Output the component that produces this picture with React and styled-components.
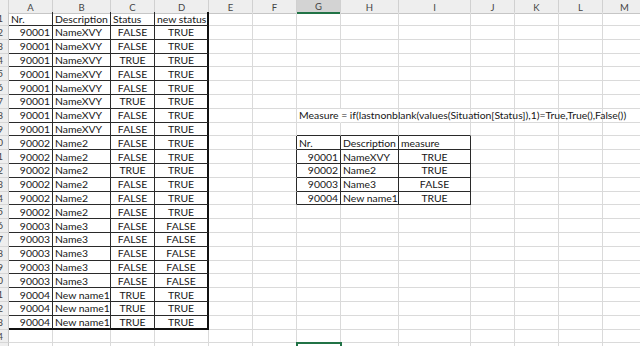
import React from "react";
import styled, { createGlobalStyle } from "styled-components";

const GlobalStyle = createGlobalStyle`
    html, body {
        margin: 0;
        padding: 0;
        background: #ffffff;
        overflow: hidden;
    }
`;

/* column widths, first one is the row header */
const COLS = [
    { key: "", w: 9 },
    { key: "A", w: 44 },
    { key: "B", w: 58 },
    { key: "C", w: 44 },
    { key: "D", w: 54 },
    { key: "E", w: 44 },
    { key: "F", w: 44 },
    { key: "G", w: 44 },
    { key: "H", w: 58 },
    { key: "I", w: 72 },
    { key: "J", w: 44 },
    { key: "K", w: 44 },
    { key: "L", w: 44 },
    { key: "M", w: 44 },
];

const ROW_H = 13.8;
const ROW_COUNT = 25;

const Sheet = styled.div`
    width: 640px;
    height: 346px;
    overflow: hidden;
    font-family: Lato, "Liberation Sans", sans-serif;
    font-size: 10.4px;
    color: #161616;
`;

const Row = styled.div`
    display: grid;
    grid-template-columns: ${COLS.map((c) => c.w + "px").join(" ")};
    height: ${(p) => p.$h}px;
`;

const ColHead = styled.div`
    box-sizing: border-box;
    display: flex;
    align-items: center;
    justify-content: center;
    background: ${(p) => (p.$selected ? "#d3d3d3" : "#eeeeee")};
    border-right: 1px solid #d0d0d0;
    border-bottom: ${(p) => (p.$selected ? "2px solid #217346" : "1px solid #c6c6c6")};
    color: #444;
    font-size: 9.5px;
    padding-top: 1px;
`;

const RowHead = styled.div`
    box-sizing: border-box;
    display: flex;
    align-items: center;
    justify-content: flex-end;
    overflow: hidden;
    background: #eeeeee;
    border-right: 1px solid #c6c6c6;
    border-bottom: 1px solid #d6d6d6;
    color: #444;
    font-size: 9.5px;
    padding-right: 5px;
    white-space: nowrap;
`;

const Cell = styled.div`
    box-sizing: border-box;
    display: flex;
    align-items: center;
    justify-content: ${(p) =>
        p.$align === "right" ? "flex-end" : p.$align === "center" ? "center" : "flex-start"};
    padding: 0 2px;
    white-space: nowrap;
    overflow: ${(p) => (p.$spill ? "visible" : "hidden")};
    border-right: ${(p) => p.$br};
    border-bottom: ${(p) => p.$bb};
    outline: ${(p) => (p.$active ? "2px solid #217346" : "none")};
    outline-offset: -1px;
    position: ${(p) => (p.$active ? "relative" : "static")};
`;

const Formula = styled.span`
    position: relative;
    z-index: 1;
`;

/* source table A1:D23 */
const mainRows = [
    ["90001", "NameXVY", "FALSE", "TRUE"],
    ["90001", "NameXVY", "FALSE", "TRUE"],
    ["90001", "NameXVY", "TRUE", "TRUE"],
    ["90001", "NameXVY", "FALSE", "TRUE"],
    ["90001", "NameXVY", "FALSE", "TRUE"],
    ["90001", "NameXVY", "TRUE", "TRUE"],
    ["90001", "NameXVY", "FALSE", "TRUE"],
    ["90001", "NameXVY", "FALSE", "TRUE"],
    ["90002", "Name2", "FALSE", "TRUE"],
    ["90002", "Name2", "FALSE", "TRUE"],
    ["90002", "Name2", "TRUE", "TRUE"],
    ["90002", "Name2", "FALSE", "TRUE"],
    ["90002", "Name2", "FALSE", "TRUE"],
    ["90002", "Name2", "FALSE", "TRUE"],
    ["90003", "Name3", "FALSE", "FALSE"],
    ["90003", "Name3", "FALSE", "FALSE"],
    ["90003", "Name3", "FALSE", "FALSE"],
    ["90003", "Name3", "FALSE", "FALSE"],
    ["90003", "Name3", "FALSE", "FALSE"],
    ["90004", "New name1", "TRUE", "TRUE"],
    ["90004", "New name1", "TRUE", "TRUE"],
    ["90004", "New name1", "TRUE", "TRUE"],
];

const summaryRows = [
    ["90001", "NameXVY", "TRUE"],
    ["90002", "Name2", "TRUE"],
    ["90003", "Name3", "FALSE"],
    ["90004", "New name1", "TRUE"],
];

/* cells: key "row,col" with col 1 = A */
const cells = {};
const put = (r, c, text, align) => {
    cells[r + "," + c] = { text, align };
};

["Nr.", "Description", "Status", "new status"].forEach((t, i) => put(1, i + 1, t, "left"));
mainRows.forEach((row, i) => {
    put(i + 2, 1, row[0], "right");
    put(i + 2, 2, row[1], "left");
    put(i + 2, 3, row[2], "center");
    put(i + 2, 4, row[3], "center");
});

["Nr.", "Description", "measure"].forEach((t, i) => put(10, i + 7, t, "left"));
summaryRows.forEach((row, i) => {
    put(i + 11, 7, row[0], "right");
    put(i + 11, 8, row[1], "left");
    put(i + 11, 9, row[2], "center");
});

const FORMULA = "Measure = if(lastnonblank(values(Situation[Status]),1)=True,True(),False())";

const tables = [
    { r1: 1, r2: 23, c1: 1, c2: 4, heavy: true },
    { r1: 10, r2: 14, c1: 7, c2: 9, heavy: false },
];

const tableAt = (r, c) => tables.find((t) => r >= t.r1 && r <= t.r2 && c >= t.c1 && c <= t.c2);

const GRID = "1px solid #dadada";

const rightEdge = (r, c) => {
    const here = tableAt(r, c);
    const next = tableAt(r, c + 1);
    if (here && here.heavy && c === here.c2) return "2px solid #111";
    if (here || next) return "1px solid #2a2a2a";
    return GRID;
};

const bottomEdge = (r, c) => {
    const here = tableAt(r, c);
    const below = tableAt(r + 1, c);
    if (here && here.heavy && r === here.r2) return "2px solid #111";
    if (here || below) return "1px solid #2a2a2a";
    return GRID;
};

const App = () => {
    const rows = Array.from({ length: ROW_COUNT }, (_, i) => i + 1);

    return (
        <Sheet>
            <GlobalStyle />
            <Row $h={12.3}>
                {COLS.map((col, i) => (
                    <ColHead key={i} $selected={col.key === "G"}>
                        {col.key}
                    </ColHead>
                ))}
            </Row>

            {rows.map((r) => (
                <Row key={r} $h={ROW_H}>
                    <RowHead>{r}</RowHead>
                    {COLS.slice(1).map((col, i) => {
                        const c = i + 1;
                        const cell = cells[r + "," + c];
                        const isFormula = r === 8 && c === 7;
                        return (
                            <Cell
                                key={c}
                                $align={cell ? cell.align : "left"}
                                $br={isFormula ? "1px solid transparent" : rightEdge(r, c)}
                                $bb={bottomEdge(r, c)}
                                $spill={isFormula}
                                $active={r === 25 && col.key === "G"}
                            >
                                {isFormula ? <Formula>{FORMULA}</Formula> : cell ? cell.text : null}
                            </Cell>
                        );
                    })}
                </Row>
            ))}
        </Sheet>
    );
};

export default App;
